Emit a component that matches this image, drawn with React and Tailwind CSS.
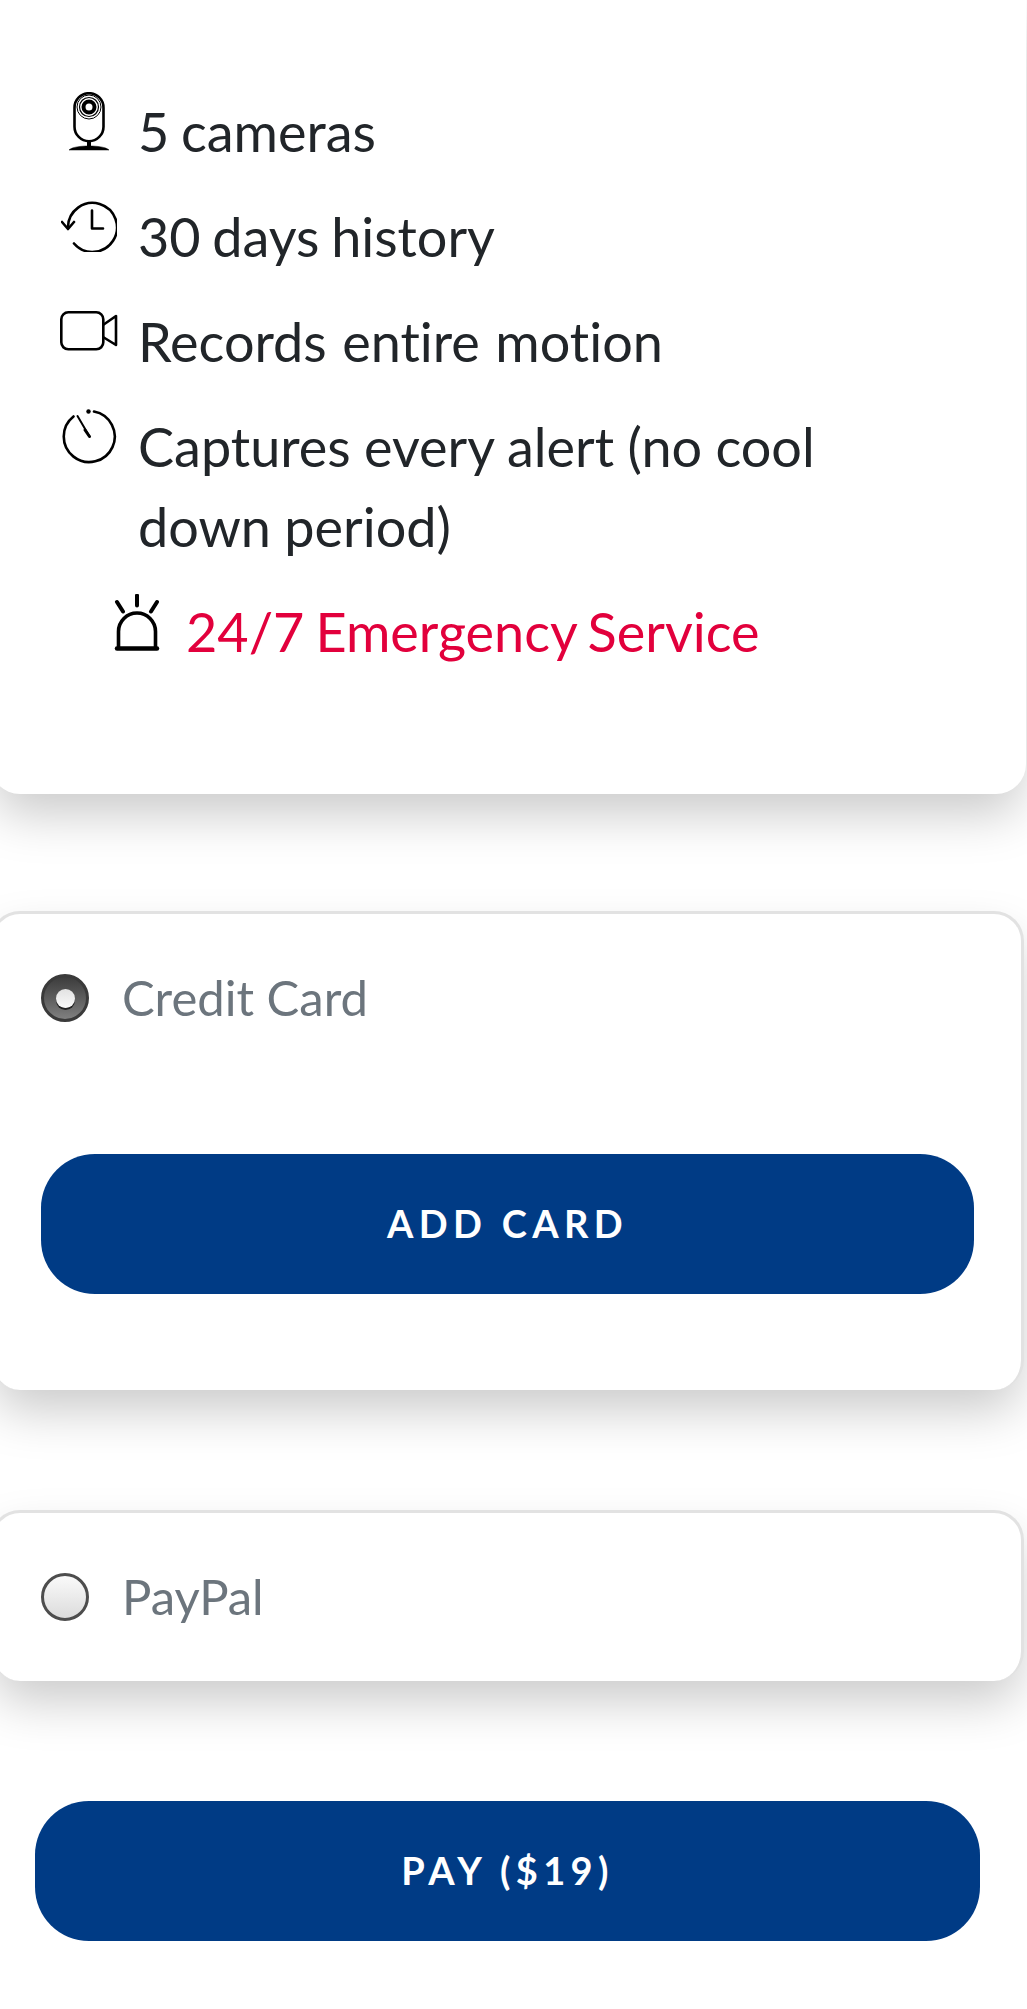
import React from 'react';

const CameraIcon = () => (
  <svg width="40" height="59" viewBox="0 0 40 59" fill="none" stroke="#000">
    <rect x="5.500" y="1.200" width="29" height="48" rx="14.500" strokeWidth="2.600" />
    <circle cx="20" cy="15" r="12" strokeWidth="1" />
    <circle cx="20" cy="15" r="9.5" strokeWidth="1.2" />
    <circle cx="20" cy="15" r="5.5" strokeWidth="4" />
    <path d="M20 49v5" strokeWidth="4" />
    <path d="M0 58c3-3 12-4 20-4s17 1 20 4z" fill="#000" strokeWidth="0.5" />
  </svg>
);

const HistoryIcon = () => (
  <svg width="56" height="51" viewBox="0 0 56 51" fill="none" stroke="#000" strokeWidth="2.600" strokeLinecap="round" strokeLinejoin="round">
    <path d="M7 26A24.500 24.500 0 1 1 13 42.500" />
    <path d="M1 21l6 7 6-7" />
    <path d="M31 9.500v18h11" />
  </svg>
);

const VideoIcon = () => (
  <svg width="58" height="40" viewBox="0 0 58 40" fill="none" stroke="#000" strokeWidth="2.600" strokeLinejoin="round">
    <rect x="1.300" y="1.300" width="42" height="37" rx="7" />
    <path d="M43 14l13-9v29l-13-8" />
  </svg>
);

const TimerIcon = () => (
  <svg width="55" height="55" viewBox="0 0 55 55" fill="none" stroke="#000" strokeWidth="2.600" strokeLinecap="round">
    <path d="M32 2.500A25.500 25.500 0 1 1 11.500 7.500" />
    <circle cx="26.500" cy="2.500" r="2.200" fill="#000" stroke="none" />
    <path d="M15.500 7l12 20.500" strokeWidth="2" />
    <path d="M23 21l4.500 6.500" strokeWidth="3" />
  </svg>
);

const SirenIcon = () => (
  <svg width="46" height="57" viewBox="0 0 46 57" fill="none" stroke="#000" strokeLinecap="round">
    <path d="M23 1.500v10M3 8l6 9.500M43 8l-6 9.500" strokeWidth="4" />
    <path d="M4.500 54V37.500a18.500 18.500 0 0 1 37 0V54" strokeWidth="3.600" />
    <path d="M3 54.500h40" strokeWidth="4.500" />
  </svg>
);

const features = [
  { icon: <CameraIcon />, text: '5 cameras', iconClass: 'pl-[9px] mt-0', spacing: '[word-spacing:-0.04em]' },
  { icon: <HistoryIcon />, text: '30 days history', iconClass: 'pl-px mt-[4px]', spacing: '[word-spacing:-0.04em]' },
  { icon: <VideoIcon />, text: 'Records entire motion', iconClass: 'mt-[9px]', spacing: '[word-spacing:0.03em]' },
  { icon: <TimerIcon />, text: 'Captures every alert (no cool down period)', iconClass: 'pl-[2px] mt-[2px]', spacing: '[word-spacing:-0.01em]' },
];

const Radio = ({ checked }) =>
  checked ? (
    <span className="flex h-12 w-12 shrink-0 items-center justify-center rounded-full border-[3px] border-[#3a3a3a] bg-gradient-to-b from-[#3c3c3c] to-[#808080]">
      <span className="h-[19px] w-[19px] rounded-full bg-gradient-to-b from-[#e2e2e2] to-[#fafafa] shadow-[0_2px_0_#222]" />
    </span>
  ) : (
    <span className="h-12 w-12 shrink-0 rounded-full border-[3px] border-[#4d4d4d] bg-gradient-to-b from-[#fafafa] to-[#dcdcdc]" />
  );

const PrimaryButton = ({ children, className }) => (
  <button className={`flex h-[140px] items-center justify-center rounded-[54px] bg-[#003b85] pb-[2px] text-[38px] font-bold tracking-[0.14em] text-white ${className}`}>
    {children}
  </button>
);

export default function App() {
  return (
    <div className="h-[2009px] w-[1027px] overflow-hidden bg-white font-['Lato','Carlito',sans-serif] text-[#212529] [font-variant-ligatures:none]">
      {/* plan */}
      <section className="-ml-[10px] h-[794px] w-[1036px] rounded-b-[30px] bg-white pt-[92px] pl-[70px] shadow-[0_24px_50px_-4px_rgba(0,0,0,0.21)]">
        <ul className="flex w-[800px] flex-col gap-[25px] text-[54px] leading-[80px]">
          {features.map((f) => (
            <li key={f.text} className="flex items-start">
              <span className={`w-[78px] shrink-0 ${f.iconClass}`}>{f.icon}</span>
              <span className={f.spacing}>{f.text}</span>
            </li>
          ))}
          <li className="flex items-start pl-[54px] text-[#e2003c]">
            <span className="w-[72px] shrink-0 mt-[2px]"><SirenIcon /></span>
            <span className="[word-spacing:-0.05em]">24/7 Emergency Service</span>
          </li>
        </ul>
      </section>

      {/* credit card */}
      <section className="-ml-[10px] mt-[117px] h-[479px] w-[1034px] rounded-[30px] border-x-[3px] border-t-[3px] border-[#e2e2e2] bg-white pt-[60px] pl-[48px] shadow-[0_24px_50px_-4px_rgba(0,0,0,0.21)]">
        <label className="flex h-12 items-center gap-[33px] text-[49px] text-[#6c757d]">
          <Radio checked />
          Credit Card
        </label>
        <PrimaryButton className="mt-[132px] w-[933px]">ADD CARD</PrimaryButton>
      </section>

      {/* paypal */}
      <section className="-ml-[10px] mt-[120px] flex h-[171px] w-[1034px] items-center rounded-[30px] border-x-[3px] border-t-[3px] border-[#e2e2e2] bg-white pl-[48px] shadow-[0_24px_50px_-4px_rgba(0,0,0,0.21)]">
        <label className="flex h-12 items-center gap-[33px] text-[49px] text-[#6c757d]">
          <Radio />
          PayPal
        </label>
      </section>

      <div className="mt-[120px] pl-[35px]">
        <PrimaryButton className="w-[945px]">PAY ($19)</PrimaryButton>
      </div>
    </div>
  );
}
